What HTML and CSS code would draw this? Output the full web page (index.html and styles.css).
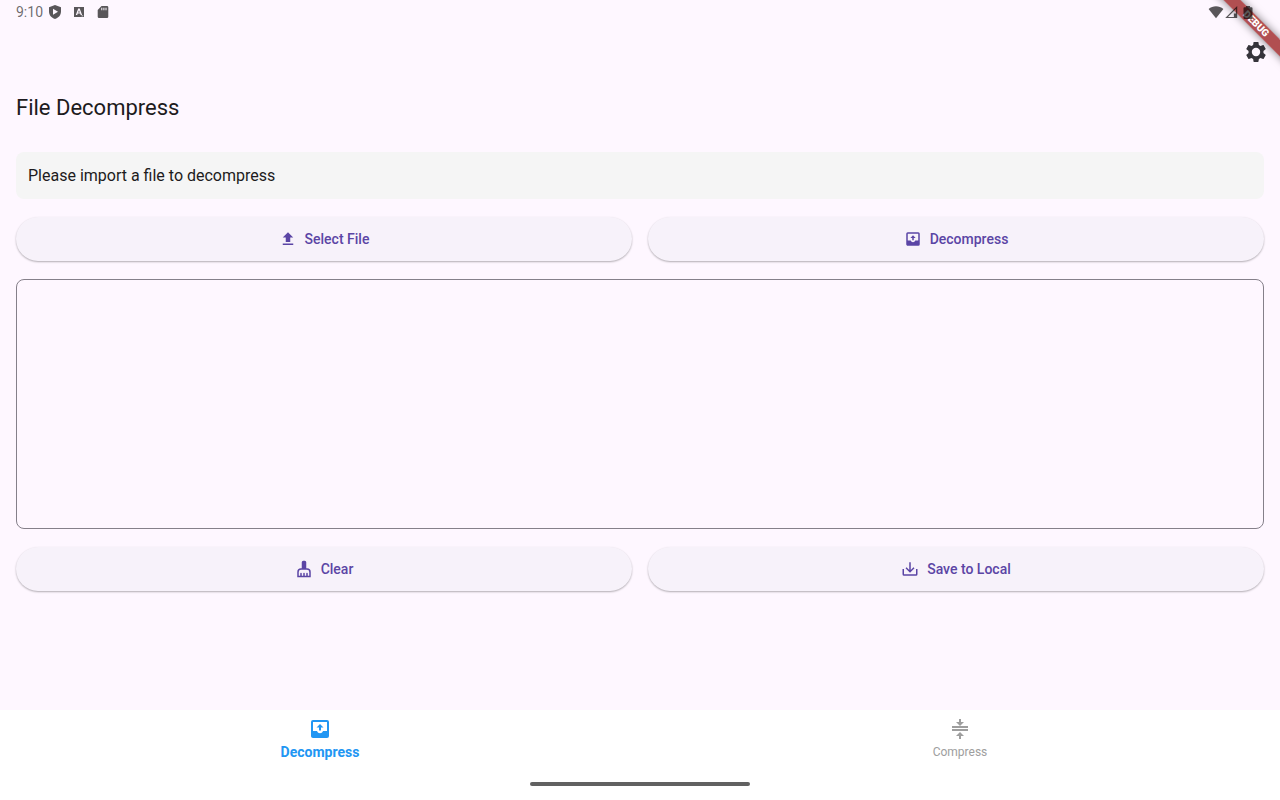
FILE: index.html
```html
<!DOCTYPE html>
<html lang="en">
<head>
    <meta charset="UTF-8">
    <meta name="viewport" content="width=device-width, initial-scale=1.0">
    <title>File Decompress</title>
    <link rel="stylesheet" href="styles.css">
</head>
<body>
    <div class="debug-corner"><span class="debug-banner">DEBUG</span></div>

    <div class="status-bar">
        <div class="status-left">
            <span class="clock">9:10</span>
            <svg class="status-icon" viewBox="0 0 16 16"><path fill-rule="evenodd" d="M8 1l6 2.300v4.200c0 3.600-2.400 6.400-6 7.500-3.600-1.100-6-3.900-6-7.500V3.300zM6 4.800v6L11 7.800z"/></svg>
            <svg class="status-icon" viewBox="0 0 16 16"><path fill-rule="evenodd" d="M3 3h10v10H3zM7.200 4.500L4.800 11h1.400l.5-1.400h2.500L9.700 11h1.400L8.700 4.500zM8 6.200l.8 2.300H7.100zM10.500 11.500v.8h1.700v-.8z"/></svg>
            <svg class="status-icon" viewBox="0 0 16 16"><path fill-rule="evenodd" d="M6.500 2H12a1.300 1.300 0 0 1 1.300 1.300v9.400A1.300 1.300 0 0 1 12 14H4a1.300 1.300 0 0 1-1.300-1.300V6zM6.300 3.800v2.400h1V3.800zM8.400 3.800v2.400h1V3.800zM10.500 3.800v2.400h1V3.800z"/></svg>
        </div>
        <div class="status-right">
            <svg class="status-icon" viewBox="0 0 16 16"><path d="M8 14.200L.6 5C4.800 1.200 11.200 1.200 15.400 5z"/></svg>
            <svg class="status-icon" viewBox="0 0 16 16"><path fill-rule="evenodd" d="M13.200 2v12H1.200zM12.100 4.800L4 12.900h5.900V9.500h2.200z"/></svg>
            <svg class="status-icon" viewBox="0 0 16 16"><path d="M6 2h4v1.200h1.500a1 1 0 0 1 1 1V14a1 1 0 0 1-1 1h-7a1 1 0 0 1-1-1V4.200a1 1 0 0 1 1-1H6z"/></svg>
        </div>
    </div>

    <header class="app-bar">
        <button class="icon-button" type="button" aria-label="Settings">
            <svg class="icon-large" viewBox="0 0 24 24"><path d="M19.430 12.980c.04-.32.07-.64.07-.98s-.03-.66-.07-.98l2.110-1.650c.19-.15.24-.42.12-.64l-2-3.460c-.12-.22-.39-.3-.61-.22l-2.490 1c-.52-.4-1.080-.73-1.690-.98l-.38-2.650C14.460 2.180 14.250 2 14 2h-4c-.25 0-.46.18-.49.42l-.38 2.650c-.61.25-1.170.59-1.690.98l-2.490-1c-.23-.09-.49 0-.61.22l-2 3.460c-.13.22-.07.49.12.64l2.110 1.650c-.04.32-.07.65-.07.98s.03.66.07.98l-2.110 1.650c-.19.15-.24.42-.12.64l2 3.460c.12.22.39.3.61.22l2.490-1c.52.4 1.080.73 1.690.98l.38 2.650c.03.24.24.42.49.42h4c.25 0 .46-.18.49-.42l.38-2.650c.61-.25 1.170-.59 1.690-.98l2.490 1c.23.09.49 0 .61-.22l2-3.460c.12-.22.07-.49-.12-.64zM12 16.200a4.200 4.200 0 1 1 0-8.400 4.200 4.200 0 0 1 0 8.400z"/></svg>
        </button>
    </header>

    <main class="content">
        <h1 class="title">File Decompress</h1>
        <p class="file-info">Please import a file to decompress</p>

        <div class="button-row">
            <button class="button" type="button">
                <svg class="icon" viewBox="0 0 24 24"><path d="M9 16h6v-6h4l-7-7-7 7h4zM5 18h14v2H5z"/></svg>
                Select File
            </button>
            <button class="button" type="button">
                <svg class="icon" viewBox="0 0 24 24"><path fill-rule="evenodd" d="M19 3H5a2 2 0 0 0-2 2v14c0 1.100.9 2 2 2h14a2 2 0 0 0 2-2V5a2 2 0 0 0-2-2zm0 11h-4c-.6 1.500-1.600 2.200-3 2.200s-2.400-.7-3-2.200H5V5h14zM15.500 10.500H13v3h-2v-3H8.500L12 7z"/></svg>
                Decompress
            </button>
        </div>

        <div class="output"></div>

        <div class="button-row">
            <button class="button" type="button">
                <svg class="icon" viewBox="0 0 24 24"><path fill-rule="evenodd" d="M16 11h-1V3a2 2 0 0 0-2-2h-2a2 2 0 0 0-2 2v8H8a5 5 0 0 0-5 5v7h18v-7a5 5 0 0 0-5-5zm3 10h-2v-3a1 1 0 0 0-2 0v3h-2v-3a1 1 0 0 0-2 0v3H9v-3a1 1 0 0 0-2 0v3H5v-5a3 3 0 0 1 3-3h8a3 3 0 0 1 3 3z"/></svg>
                Clear
            </button>
            <button class="button" type="button">
                <svg class="icon" viewBox="0 0 24 24"><path d="M11 3h2v10.200l3.600-3.600L18 11l-6 6-6-6 1.400-1.400 3.600 3.600zM2 12h2v7h16v-7h2v7a2 2 0 0 1-2 2H4a2 2 0 0 1-2-2z"/></svg>
                Save to Local
            </button>
        </div>
    </main>

    <footer class="bottom">
        <nav class="tabs">
            <button class="tab tab-active" type="button" aria-current="page">
                <svg class="icon-large" viewBox="0 0 24 24"><path fill-rule="evenodd" d="M19 3H5a2 2 0 0 0-2 2v14c0 1.100.9 2 2 2h14a2 2 0 0 0 2-2V5a2 2 0 0 0-2-2zm0 11h-4c-.6 1.500-1.600 2.200-3 2.200s-2.400-.7-3-2.200H5V5h14zM15.500 10.500H13v3h-2v-3H8.500L12 7z"/></svg>
                Decompress
            </button>
            <button class="tab" type="button">
                <svg class="icon-large" viewBox="0 0 24 24"><path d="M8 19h3v3h2v-3h3l-4-4zM16 5h-3V2h-2v3H8l4 4zM4 9h16v2H4zM4 12h16v2H4z"/></svg>
                Compress
            </button>
        </nav>
        <div class="home-handle"></div>
    </footer>
</body>
</html>
```
FILE: styles.css
```css
* {
    box-sizing: border-box;
}
body {
    margin: 0;
    min-height: 100vh;
    display: flex;
    flex-direction: column;
    background: #fef7ff;
    color: #1d1b20;
    font-family: Roboto, "Noto Sans", sans-serif;
}
button {
    border: 0;
    padding: 0;
    background: none;
    font-family: inherit;
    cursor: pointer;
}
svg {
    display: block;
    fill: currentColor;
}

/* Status bar */
.status-bar {
    position: relative;
    z-index: 2;
    display: flex;
    justify-content: space-between;
    height: 24px;
    padding: 0 24px 0 16px;
    color: rgba(0, 0, 0, 0.65);
}
.status-left,
.status-right {
    display: flex;
    align-items: center;
}
.status-left {
    gap: 8px;
}
.clock {
    margin-right: -4px;
    font-size: 14px;
    line-height: 24px;
    opacity: 0.9;
}
.status-icon {
    width: 16px;
    height: 16px;
}

/* Debug ribbon */
.debug-corner {
    position: absolute;
    top: 0;
    right: 0;
    width: 80px;
    height: 80px;
    overflow: hidden;
    pointer-events: none;
}
.debug-banner {
    position: absolute;
    top: 18px;
    right: -36px;
    width: 120px;
    height: 12px;
    background: rgba(150, 20, 20, 0.74);
    box-shadow: 0 0 8px rgba(0, 0, 0, 0.5);
    color: white;
    font-size: 10px;
    font-weight: 900;
    line-height: 12px;
    text-align: center;
    transform: rotate(45deg);
}

/* App bar */
.app-bar {
    display: flex;
    justify-content: flex-end;
    height: 56px;
    color: #36343b;
}
.icon-button {
    display: flex;
    align-items: center;
    justify-content: center;
    width: 48px;
    height: 56px;
    color: inherit;
}
.icon {
    width: 18px;
    height: 18px;
}
.icon-large {
    width: 24px;
    height: 24px;
}

/* Content */
.content {
    flex: 1;
    display: flex;
    flex-direction: column;
    padding: 12px 16px;
}
.title {
    margin: 0 0 28px;
    font-size: 22px;
    font-weight: 400;
    line-height: 32px;
}
.file-info {
    margin: 0 0 18px;
    padding: 12px;
    border-radius: 8px;
    background: #f5f5f5;
    font-size: 16px;
    line-height: 23px;
}
.button-row {
    display: grid;
    grid-template-columns: 1fr 1fr;
    gap: 16px;
}
.button {
    display: flex;
    align-items: center;
    justify-content: center;
    gap: 8px;
    height: 44px;
    border-radius: 22px;
    background: #f7f2fa;
    box-shadow: 0 1px 2px rgba(0, 0, 0, 0.3);
    color: #5b45a5;
    font-size: 14px;
    font-weight: 500;
}
.output {
    height: 250px;
    margin: 18px 0;
    border: 1px solid #85808a;
    border-radius: 8px;
}

/* Bottom navigation */
.bottom {
    height: 90px;
    background: white;
}
.tabs {
    display: grid;
    grid-template-columns: 1fr 1fr;
    height: 72px;
}
.tab {
    display: flex;
    flex-direction: column;
    align-items: center;
    padding-top: 7px;
    gap: 2px;
    color: #9e9e9e;
    font-size: 12px;
    line-height: 18px;
}
.tab-active {
    color: #2196f3;
    font-size: 14px;
    font-weight: 700;
}
.home-handle {
    width: 220px;
    height: 4px;
    margin: 0 auto;
    border-radius: 2px;
    background: #616161;
}
```
